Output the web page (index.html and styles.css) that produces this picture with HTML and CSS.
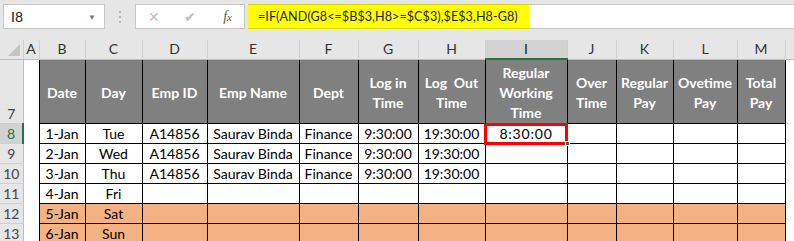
FILE: index.html
```html
<!DOCTYPE html>
<html lang="en">
<head>
  <meta charset="UTF-8">
  <title>Regular Working Time</title>
  <link rel="stylesheet" href="styles.css">
</head>
<body>
  <div class="formula-bar">
    <div class="name-box">
      <span>I8</span>
      <span class="drop">&#9660;</span>
    </div>
    <div class="grip"><i></i><i></i><i></i></div>
    <div class="fx-buttons">
      <span class="btn">&#10005;</span>
      <span class="btn">&#10004;</span>
      <span class="fx"><em>f</em><em>x</em></span>
    </div>
    <div class="formula-input">
      <span class="formula">=IF(AND(G8&lt;=$B$3,H8&gt;=$C$3),$E$3,H8-G8)</span>
    </div>
  </div>

  <table class="sheet">
    <colgroup>
      <col style="width:23px">
      <col style="width:16px">
      <col style="width:46px">
      <col style="width:57px">
      <col style="width:65px">
      <col style="width:92px">
      <col style="width:59px">
      <col style="width:60px">
      <col style="width:67px">
      <col style="width:82px">
      <col style="width:49px">
      <col style="width:57px">
      <col style="width:64px">
      <col style="width:48px">
      <col style="width:9px">
    </colgroup>
    <thead>
      <tr class="col-heads">
        <th class="corner"><span class="tri"></span></th>
        <th>A</th><th>B</th><th>C</th><th>D</th><th>E</th><th>F</th><th>G</th>
        <th>H</th><th class="active">I</th><th>J</th><th>K</th><th>L</th><th>M</th><th></th>
      </tr>
    </thead>
    <tbody>
      <tr class="head-row">
        <th class="row-num">7</th>
        <td class="blank"></td>
        <td class="h">Date</td>
        <td class="h">Day</td>
        <td class="h">Emp ID</td>
        <td class="h">Emp Name</td>
        <td class="h">Dept</td>
        <td class="h">Log in<br>Time</td>
        <td class="h">Log&nbsp; Out<br>Time</td>
        <td class="h">Regular<br>Working<br>Time</td>
        <td class="h">Over<br>Time</td>
        <td class="h">Regular<br>Pay</td>
        <td class="h">Ovetime<br>Pay</td>
        <td class="h">Total<br>Pay</td>
        <td class="blank"></td>
      </tr>
      <tr>
        <th class="row-num active">8</th>
        <td class="blank"></td>
        <td>1-Jan</td><td>Tue</td><td>A14856</td><td>Saurav Binda</td><td>Finance</td>
        <td>9:30:00</td><td>19:30:00</td>
        <td class="selected"><span>8:30:00</span><i class="handle"></i></td>
        <td></td><td></td><td></td><td></td>
        <td class="blank"></td>
      </tr>
      <tr>
        <th class="row-num">9</th>
        <td class="blank"></td>
        <td>2-Jan</td><td>Wed</td><td>A14856</td><td>Saurav Binda</td><td>Finance</td>
        <td>9:30:00</td><td>19:30:00</td>
        <td></td><td></td><td></td><td></td><td></td>
        <td class="blank"></td>
      </tr>
      <tr>
        <th class="row-num">10</th>
        <td class="blank"></td>
        <td>3-Jan</td><td>Thu</td><td>A14856</td><td>Saurav Binda</td><td>Finance</td>
        <td>9:30:00</td><td>19:30:00</td>
        <td></td><td></td><td></td><td></td><td></td>
        <td class="blank"></td>
      </tr>
      <tr>
        <th class="row-num">11</th>
        <td class="blank"></td>
        <td>4-Jan</td><td>Fri</td>
        <td></td><td></td><td></td><td></td><td></td><td></td><td></td><td></td><td></td><td></td>
        <td class="blank"></td>
      </tr>
      <tr class="weekend">
        <th class="row-num">12</th>
        <td class="blank"></td>
        <td>5-Jan</td><td>Sat</td>
        <td></td><td></td><td></td><td></td><td></td><td></td><td></td><td></td><td></td><td></td>
        <td class="blank"></td>
      </tr>
      <tr class="weekend">
        <th class="row-num">13</th>
        <td class="blank"></td>
        <td>6-Jan</td><td>Sun</td>
        <td></td><td></td><td></td><td></td><td></td><td></td><td></td><td></td><td></td><td></td>
        <td class="blank"></td>
      </tr>
    </tbody>
  </table>
</body>
</html>
```

FILE: styles.css
```css
* {
  margin: 0;
  padding: 0;
  box-sizing: border-box;
}

body {
  width: 794px;
  height: 241px;
  overflow: hidden;
  background: #e6e6e6;
  font-family: Lato, 'Open Sans', sans-serif;
  color: #000;
}

/* 数式バー */
.formula-bar {
  display: flex;
  align-items: center;
  height: 40px;
  padding: 4px 0 11px 3px;
}

.name-box {
  width: 102px;
  height: 25px;
  background: #fff;
  border: 1px solid #c6c6c6;
  display: flex;
  align-items: center;
  justify-content: space-between;
  padding: 0 8px 0 7px;
  font-size: 14px;
  color: #222;
}

.name-box .drop {
  font-size: 8px;
  color: #777;
}

.grip {
  width: 30px;
  display: flex;
  flex-direction: column;
  align-items: center;
  gap: 3px;
}

.grip i {
  width: 2px;
  height: 2px;
  background: #b4b4b4;
}

.fx-buttons {
  width: 110px;
  height: 25px;
  background: #fff;
  border: 1px solid #c6c6c6;
  display: flex;
  align-items: center;
  padding: 0 12px 0 12px;
  color: #bdbdbd;
  font-size: 14px;
}

.fx-buttons .btn {
  width: 36px;
}

.fx-buttons .fx {
  margin-left: auto;
  color: #555;
  font-family: 'Liberation Serif', serif;
  font-size: 14px;
}

.fx em + em {
  font-size: 11px;
}

.formula-input {
  flex: 1;
  height: 25px;
  margin-left: 3px;
  background: #fff;
  border-top: 1px solid #c6c6c6;
  border-bottom: 1px solid #c6c6c6;
  display: flex;
}

.formula {
  background: #ffff00;
  border-top: 1px solid #d8d800;
  border-bottom: 1px solid #d8d800;
  margin: -1px 0;
  padding: 0 11px 0 10px;
  display: flex;
  align-items: center;
  font-size: 12.6px;
  letter-spacing: 0.05px;
  color: #222;
}

/* シート */
.sheet {
  border-collapse: collapse;
  table-layout: fixed;
  width: 794px;
  background: #fff;
  font-size: 14px;
}

.col-heads th {
  height: 19px;
  background: #e6e6e6;
  border-right: 1px solid #cfcfcf;
  border-bottom: 1px solid #bdbdbd;
  font-weight: normal;
  font-size: 14px;
  color: #333;
  line-height: 18px;
}

.col-heads th.active {
  background: #d2d2d2;
  border-bottom: 2px solid #217346;
  color: #222;
}

.corner {
  position: relative;
}

.corner .tri {
  position: absolute;
  right: 3px;
  bottom: 3px;
  width: 0;
  height: 0;
  border-left: 12px solid transparent;
  border-bottom: 12px solid #c4c4c4;
}

.row-num {
  background: #e6e6e6;
  border-bottom: 1px solid #cfcfcf;
  border-right: 1px solid #bdbdbd;
  font-weight: normal;
  font-size: 14px;
  color: #444;
  vertical-align: bottom;
  text-align: center;
  line-height: 19px;
}

.row-num.active {
  background: #d2d2d2;
  border-right: 2px solid #217346;
  color: #217346;
}

.sheet td {
  height: 20px;
  border: 1px solid #000;
  text-align: center;
  vertical-align: middle;
  line-height: 18px;
  white-space: nowrap;
  overflow: hidden;
  padding-top: 1px;
}

.sheet td.blank {
  border: none;
  background: #fff;
}

.head-row td.h {
  height: 63px;
  background: #808080;
  color: #fff;
  font-weight: bold;
  line-height: 20px;
  padding-top: 3px;
}

.weekend td {
  background: #f4b183;
}

.sheet td.selected {
  position: relative;
  outline: 3px solid #ff0000;
  outline-offset: -2px;
  overflow: visible;
}

.selected span {
  letter-spacing: 0.8px;
}

.selected .handle {
  position: absolute;
  right: -3px;
  bottom: -3px;
  width: 5px;
  height: 5px;
  background: #217346;
  border: 1px solid #fff;
}
```
